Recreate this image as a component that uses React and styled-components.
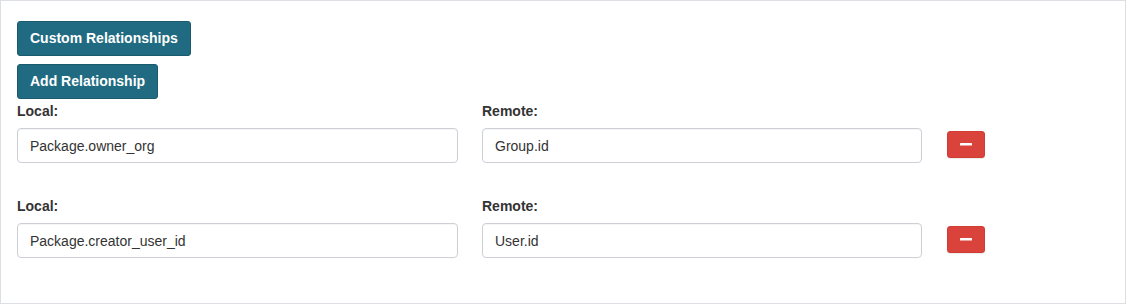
import React from "react";
import styled, { createGlobalStyle } from "styled-components";

const GlobalStyle = createGlobalStyle`
  body {
    margin: 0;
    background: #ffffff;
    font-family: "Liberation Sans", Arial, sans-serif;
    font-size: 14px;
    color: #333333;
  }
`;

const relationships = [
  { local: "Package.owner_org", remote: "Group.id" },
  { local: "Package.creator_user_id", remote: "User.id" },
];

const App = () => {
  return (
    <>
      <GlobalStyle />
      <Panel>
        <Toolbar>
          <PrimaryButton>Custom Relationships</PrimaryButton>
          <PrimaryButton>Add Relationship</PrimaryButton>
        </Toolbar>
        <Rows>
          {relationships.map((rel, index) => (
            <Row key={index}>
              <Field>
                <Label>Local:</Label>
                <Input type="text" defaultValue={rel.local} />
              </Field>
              <Field>
                <Label>Remote:</Label>
                <Input type="text" defaultValue={rel.remote} />
              </Field>
              <Action>
                <RemoveButton aria-label="Remove relationship">
                  <svg width="12" height="3" viewBox="0 0 12 3">
                    <rect x="0" y="0" width="12" height="2.6" rx="0.5" fill="#ffffff" />
                  </svg>
                </RemoveButton>
              </Action>
            </Row>
          ))}
        </Rows>
      </Panel>
    </>
  );
};

const Panel = styled.div`
  box-sizing: border-box;
  width: 1126px;
  height: 304px;
  border: 1px solid #dcdfe4;
  padding: 20px 16px 0 16px;
  background: #ffffff;
`;

const Toolbar = styled.div`
  display: flex;
  flex-direction: column;
  align-items: flex-start;
  gap: 8px;
`;

const PrimaryButton = styled.button`
  box-sizing: border-box;
  height: 35px;
  padding: 0 12px 2px;
  background: #206b82;
  border: 1px solid #1a5a6d;
  border-radius: 3px;
  color: #ffffff;
  font-family: "Liberation Sans", Arial, sans-serif;
  font-size: 14px;
  font-weight: 700;
  line-height: 20px;
  cursor: pointer;
`;

const Rows = styled.div`
  display: flex;
  flex-direction: column;
  gap: 33px;
  margin-top: 2px;
`;

const Row = styled.div`
  display: grid;
  grid-template-columns: 441px 440px 38px;
  column-gap: 24px;
  align-items: end;
`;

const Field = styled.div`
  display: flex;
  flex-direction: column;
`;

const Label = styled.label`
  font-weight: 700;
  font-size: 14px;
  line-height: 20px;
  color: #333333;
  margin-bottom: 7px;
`;

const Input = styled.input`
  box-sizing: border-box;
  width: 100%;
  height: 35px;
  padding: 6px 12px;
  border: 1px solid #ccd0d6;
  border-radius: 4px;
  font-family: "Liberation Sans", Arial, sans-serif;
  font-size: 14px;
  color: #333333;
  background: #ffffff;
  box-shadow: inset 0 1px 1px rgba(0, 0, 0, 0.04);
  outline: none;
`;

const Action = styled.div`
  margin-left: 1px;
  padding-bottom: 5px;
`;

const RemoveButton = styled.button`
  box-sizing: border-box;
  display: flex;
  align-items: center;
  justify-content: center;
  width: 38px;
  height: 27px;
  padding: 0;
  background: #d9433b;
  border: 1px solid #d13d35;
  border-radius: 3px;
  box-shadow: 0 1px 1px rgba(0, 0, 0, 0.08);
  cursor: pointer;
`;

export default App;
